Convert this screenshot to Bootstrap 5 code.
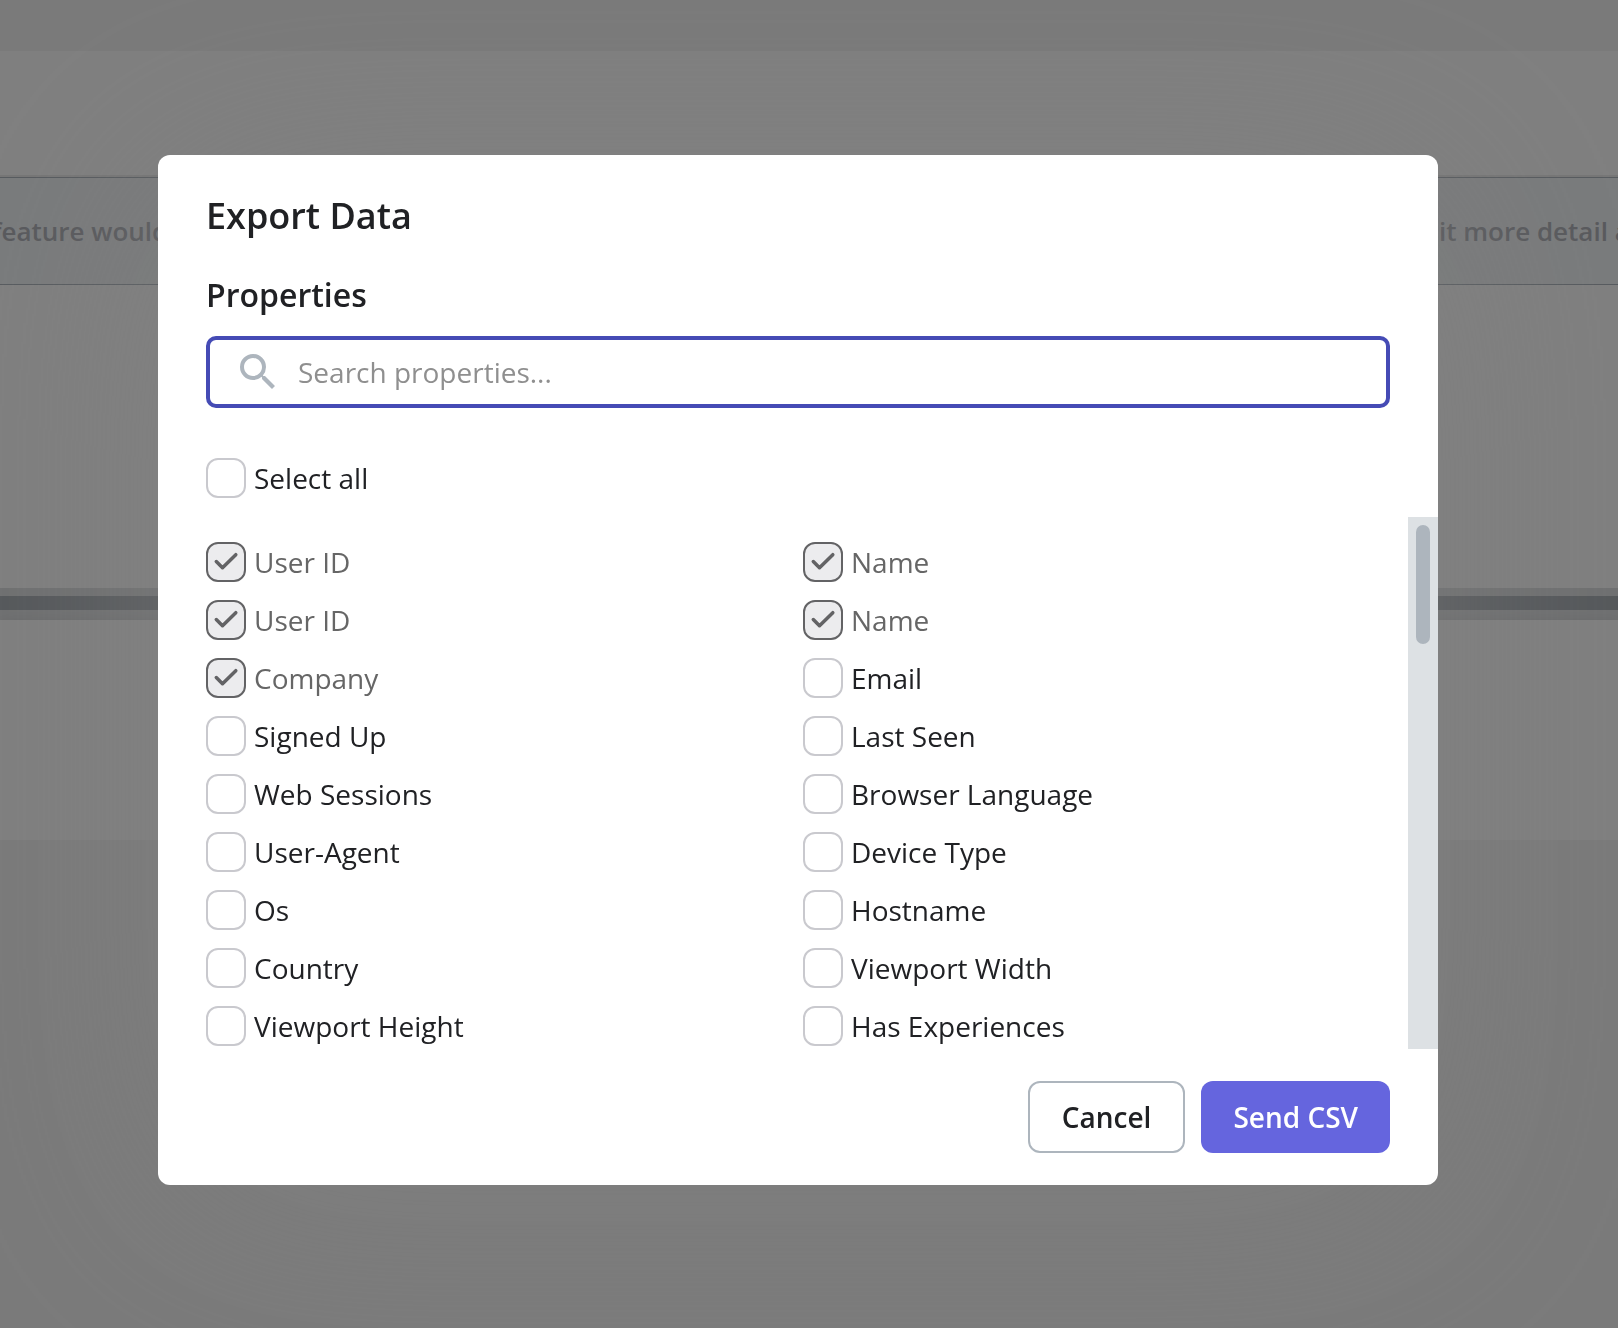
<!DOCTYPE html>
<html lang="en">
<head>
<meta charset="utf-8">
<meta name="viewport" content="width=device-width, initial-scale=1">
<title>Export Data</title>
<link href="https://cdn.jsdelivr.net/npm/bootstrap@5.3.0/dist/css/bootstrap.min.css" rel="stylesheet">
<style>
  body { font-family: "Open Sans", "Noto Sans", sans-serif; background: #f5f5f5; color: #202124; overflow: hidden; }

  /* page behind the dialog */
  .page-top { height: 51px; background: #f5f5f5; }
  .page-toolbar { height: 124px; }
  .band-edge { height: 2px; background: #ededed; }
  .notice { height: 108px; background: #f3f6f8; border-top: 1px solid #adb5bd; border-bottom: 1px solid #adb5bd; font-size: 26px; font-weight: 600; color: #b0b2b9; }
  .notice span { white-space: nowrap; }
  .notice-start { margin-left: -8px; }
  .notice-tail { width: 179px; }
  .page-space { height: 303px; }
  .scroll-bar { height: 32px; padding: 8px 0 10px; background: #dee0e2; }
  .scroll-thumb { height: 14px; background: #a9afb5; }
  .page-rest { height: 220px; box-shadow: 0 2px 12px rgba(0, 0, 0, .08); }

  /* dialog */
  .export-modal { padding: 155px 180px 24px 158px; }
  .export-modal .modal-dialog { max-width: 1280px; margin: 0 auto; }
  .export-modal .modal-content { border: 0; border-radius: 12px; color: #202124; box-shadow: 0 24px 240px rgba(130, 130, 130, .6); }
  .pad-x { padding-left: 48px; padding-right: 48px; }
  .export-title { font-size: 36px; line-height: 56px; font-weight: 600; margin: 33px 0 0; }
  .export-subtitle { font-size: 32px; line-height: 40px; font-weight: 600; margin: 31px 0 21px; }
  .search-box { height: 72px; border: 4px solid #454bb5; border-radius: 10px; padding: 0 24px; gap: 16px; }
  .search-box input { font-size: 28px; line-height: 40px; outline: 0; color: inherit; }
  .search-box input::placeholder { color: #8f8f8f; opacity: 1; }

  .prop { display: flex; align-items: center; gap: 8px; font-size: 28px; line-height: 40px; height: 40px; padding: 0; margin: 0; min-height: 0; }
  .prop .form-check-input { flex: none; width: 40px; height: 40px; margin: 0; float: none; border: 2px solid #c9c9ce; border-radius: 12px; }
  .prop .form-check-input:checked { background-color: #ececee; border-color: #636365; background-origin: border-box; background-size: 40px 40px;
    background-image: url("data:image/svg+xml,%3csvg xmlns='http://www.w3.org/2000/svg' viewBox='0 0 40 40'%3e%3cpath fill='none' stroke='%23636365' stroke-width='3.500' stroke-linecap='round' stroke-linejoin='round' d='M10.300 19.500l6.200 6.200L29.800 12.700'/%3e%3c/svg%3e"); }
  .prop .form-check-input:disabled { opacity: 1; }
  .prop .form-check-input:disabled ~ .form-check-label { opacity: 1; color: #666; }
  .select-all { margin: 50px 0 19px; }
  .prop-list { height: 532px; padding: 25px 8px 0 48px; row-gap: 18px; overflow: hidden; display: grid; grid-template-columns: 1fr 1fr; grid-auto-rows: 40px; }
  .list-track { width: 30px; padding: 8px; background: #dde1e4; }
  .list-thumb { width: 14px; height: 119px; border-radius: 7px; background: #adb5bd; }

  .export-actions { padding-top: 32px; padding-bottom: 32px; gap: 16px; }
  .export-actions .btn { height: 72px; padding: 0 32px; font-size: 28px; font-weight: 600; border: 2px solid #adb5bd; border-radius: 12px; color: #202124; background: #fff; }
  .export-actions .btn-send { border: 0; background: #6565de; color: #fff; }
</style>
</head>
<body>
<div class="bg-white" aria-hidden="true">
  <div class="page-top"></div>
  <div class="page-toolbar"></div>
  <div class="band-edge"></div>
  <div class="notice d-flex align-items-center justify-content-between">
    <span class="notice-start">feature would</span>
    <span class="notice-tail">it more detail a</span>
  </div>
  <div class="page-space"></div>
  <div class="scroll-bar"><div class="scroll-thumb"></div></div>
  <div class="page-rest"></div>
</div>

<div class="modal-backdrop show"></div>

<div class="modal show d-block export-modal" role="dialog" aria-modal="true" aria-labelledby="exportTitle">
  <div class="modal-dialog">
    <form class="modal-content">
      <div class="pad-x">
        <h1 class="export-title" id="exportTitle">Export Data</h1>
        <h2 class="export-subtitle">Properties</h2>
        <div class="search-box d-flex align-items-center">
          <svg width="48" height="48" viewBox="0 0 24 24" fill="#adb5bd" class="flex-shrink-0" aria-hidden="true"><path d="M15.500 14h-.79l-.28-.27A6.470 6.470 0 0 0 16 9.500 6.500 6.500 0 1 0 9.500 16c1.610 0 3.090-.59 4.230-1.570l.27.28v.79l5 4.990L20.490 19l-4.990-5zm-6 0C7.010 14 5 11.990 5 9.500S7.010 5 9.500 5 14 7.010 14 9.500 11.990 14 9.500 14z"/></svg>
          <input type="text" class="border-0 p-0 flex-grow-1 bg-transparent" placeholder="Search properties..." aria-label="Search properties">
        </div>
        <div class="form-check prop select-all"><input class="form-check-input" type="checkbox" id="all"><label class="form-check-label" for="all">Select all</label></div>
      </div>

      <div class="d-flex">
        <div class="prop-list flex-grow-1">
          <div class="form-check prop"><input class="form-check-input" type="checkbox" id="p1" checked disabled><label class="form-check-label" for="p1">User ID</label></div>
          <div class="form-check prop"><input class="form-check-input" type="checkbox" id="p2" checked disabled><label class="form-check-label" for="p2">Name</label></div>
          <div class="form-check prop"><input class="form-check-input" type="checkbox" id="p3" checked disabled><label class="form-check-label" for="p3">User ID</label></div>
          <div class="form-check prop"><input class="form-check-input" type="checkbox" id="p4" checked disabled><label class="form-check-label" for="p4">Name</label></div>
          <div class="form-check prop"><input class="form-check-input" type="checkbox" id="p5" checked disabled><label class="form-check-label" for="p5">Company</label></div>
          <div class="form-check prop"><input class="form-check-input" type="checkbox" id="p6"><label class="form-check-label" for="p6">Email</label></div>
          <div class="form-check prop"><input class="form-check-input" type="checkbox" id="p7"><label class="form-check-label" for="p7">Signed Up</label></div>
          <div class="form-check prop"><input class="form-check-input" type="checkbox" id="p8"><label class="form-check-label" for="p8">Last Seen</label></div>
          <div class="form-check prop"><input class="form-check-input" type="checkbox" id="p9"><label class="form-check-label" for="p9">Web Sessions</label></div>
          <div class="form-check prop"><input class="form-check-input" type="checkbox" id="p10"><label class="form-check-label" for="p10">Browser Language</label></div>
          <div class="form-check prop"><input class="form-check-input" type="checkbox" id="p11"><label class="form-check-label" for="p11">User-Agent</label></div>
          <div class="form-check prop"><input class="form-check-input" type="checkbox" id="p12"><label class="form-check-label" for="p12">Device Type</label></div>
          <div class="form-check prop"><input class="form-check-input" type="checkbox" id="p13"><label class="form-check-label" for="p13">Os</label></div>
          <div class="form-check prop"><input class="form-check-input" type="checkbox" id="p14"><label class="form-check-label" for="p14">Hostname</label></div>
          <div class="form-check prop"><input class="form-check-input" type="checkbox" id="p15"><label class="form-check-label" for="p15">Country</label></div>
          <div class="form-check prop"><input class="form-check-input" type="checkbox" id="p16"><label class="form-check-label" for="p16">Viewport Width</label></div>
          <div class="form-check prop"><input class="form-check-input" type="checkbox" id="p17"><label class="form-check-label" for="p17">Viewport Height</label></div>
          <div class="form-check prop"><input class="form-check-input" type="checkbox" id="p18"><label class="form-check-label" for="p18">Has Experiences</label></div>
        </div>
        <div class="list-track flex-shrink-0"><div class="list-thumb"></div></div>
      </div>

      <div class="export-actions pad-x d-flex justify-content-end">
        <button type="button" class="btn">Cancel</button>
        <button type="submit" class="btn btn-send">Send CSV</button>
      </div>
    </form>
  </div>
</div>
<script src="https://cdn.jsdelivr.net/npm/bootstrap@5.3.0/dist/js/bootstrap.bundle.min.js"></script>
</body>
</html>
